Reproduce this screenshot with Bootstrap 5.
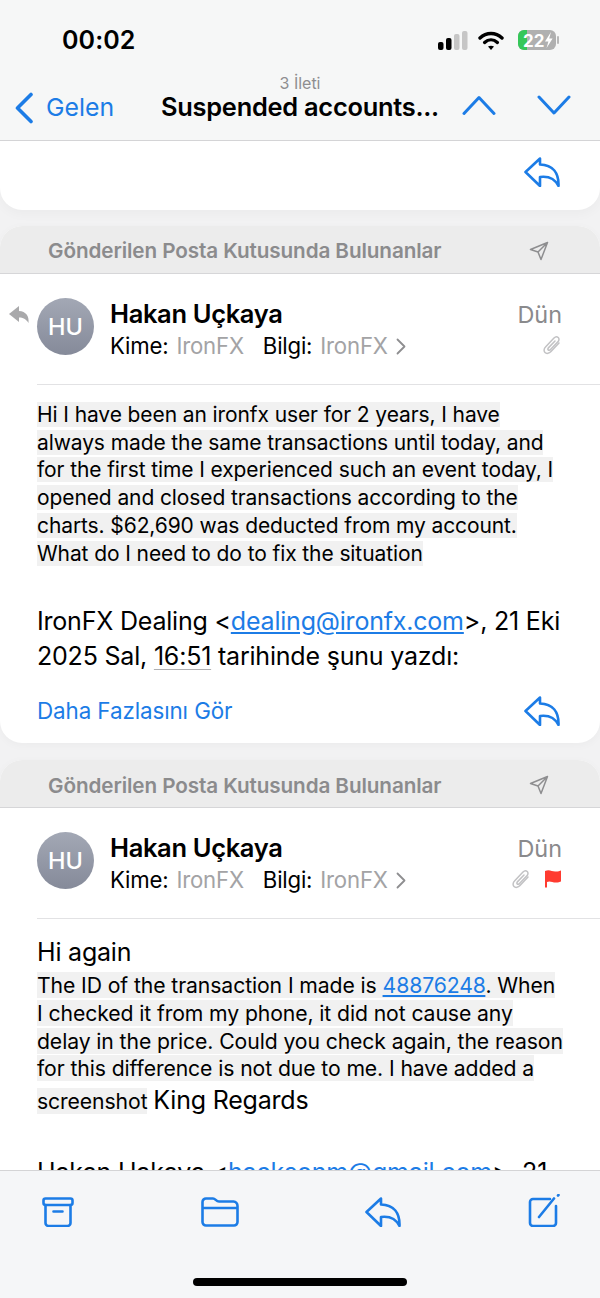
<!DOCTYPE html>
<html lang="tr">
  <head>
    <meta charset="UTF-8" />
    <meta name="viewport" content="width=device-width, initial-scale=1.0" />
    <title>Suspended accounts</title>
    <link href="https://cdn.jsdelivr.net/npm/bootstrap@5.3.0/dist/css/bootstrap.min.css" rel="stylesheet" />
    <style>
      html, body { margin: 0; height: 1298px; overflow: hidden; }
      body { font-family: Inter, "Liberation Sans", sans-serif; color: #000; background: #f2f2f3; }
      a { color: #1c7ce6; }
      .phone { height: 1298px; width: 600px; }
      .ico { display: block; flex: none; fill: none; stroke: #1c7ce6; stroke-width: 2.6; stroke-linecap: round; stroke-linejoin: round; }

      .top-bar { height: 141px; flex: none; background: #f6f7f7; border-bottom: 1px solid #d4d4d6; }
      .status-row { height: 66px; padding: 25px 40px 0 62px; }
      .clock { font-size: 25px; font-weight: 600; line-height: 30px; letter-spacing: .1px; }
      .status-icons { height: 30px; }
      .signal-gap { margin: 0 14px 0 10px; }
      .title-row { height: 74px; padding: 0 29px 0 14px; }
      .back-link { width: 130px; font-size: 24.8px; color: #1c7ce6; gap: 12px; padding-top: 23px; }
      .title-box { width: 300px; margin-left: 6px; padding-top: 9px; }
      .count { font-size: 16px; line-height: 17px; color: #8e8e90; }
      .subject { font-size: 25.4px; font-weight: 600; line-height: 30px; letter-spacing: -.25px; white-space: nowrap; }
      .arrows { gap: 41px; margin-left: auto; padding-top: 28px; }

      .scroller { flex: 1 1 auto; min-height: 0; overflow: hidden; }
      .mail-tail { height: 69px; background: #fff; border-radius: 0 0 22px 22px; padding: 16px 40px 0 0; margin-bottom: 16px; box-shadow: 0 4px 12px rgba(0,0,0,.03); }
      .mail-box { background: #fff; border-radius: 22px; margin-bottom: 17px; overflow: hidden; box-shadow: 0 2px 10px rgba(0,0,0,.03); }
      .box-head { height: 48px; background: #ececec; border-bottom: 1px solid #d6d6d8; padding: 3px 51px 0 48px; font-size: 20.7px; font-weight: 600; color: #8b8b8d; letter-spacing: -.1px; }
      .mail-meta { margin-left: 37px; height: 111px; border-bottom: 1px solid #e2e2e4; padding: 24px 38px 0 0; }
      .replied { left: -28px; top: 32px; }
      .avatar { width: 57px; height: 57px; flex: none; border-radius: 50%; background: linear-gradient(#a3a8b5, #858a99); color: #fff; font-size: 23.5px; font-weight: 500; }
      .sender { margin-left: 16px; }
      .sender-name { font-size: 25.5px; font-weight: 600; line-height: 32px; letter-spacing: -.35px; }
      .to-line { font-size: 22.2px; line-height: 30px; letter-spacing: -.2px; padding-top: 1px; }
      .to-line span { color: #a3a3a5; margin-left: 2px; }
      .to-line b { font-weight: 400; margin-left: 19px; }
      .when { font-size: 23.4px; line-height: 32px; color: #8a8a8c; margin-top: 1px; }
      .marks { gap: 13px; margin-top: 4px; }

      .mail-text { padding: 16px 37px 0 37px; font-size: 21px; line-height: 27.7px; letter-spacing: -.1px; }
      .mail-text.second { padding-top: 16px; padding-bottom: 40px; }
      .second .shade { font-size: 21.2px; }
      .para-two { margin-top: 2px; }
      .shade { background: #f1f1f1; box-decoration-break: clone; -webkit-box-decoration-break: clone; }
      .big-line { font-size: 25px; line-height: 35px; letter-spacing: -.2px; }
      .quote-line { margin-top: 37px; }
      .quote-line u { text-decoration-color: #b0b0b2; text-underline-offset: 4px; text-decoration-thickness: 1px; }
      .more-row { padding: 5px 40px 0 37px; height: 69px; }
      .more-row a { font-size: 22.4px; text-decoration: none; letter-spacing: -.1px; }

      .bottom-bar { height: 128px; flex: none; background: #f5f6f8; border-top: 1px solid #d4d4d6; }
      .tools { padding: 23px 39px 0 42px; }
      .home-line { width: 214px; height: 8px; background: #000; border-radius: 4px; margin: 51px auto 0; }
    </style>
  </head>
  <body>
    <div class="phone d-flex flex-column">
      <header class="top-bar">
        <div class="status-row d-flex justify-content-between">
          <div class="clock">00:02</div>
          <div class="status-icons d-flex align-items-center">
            <svg width="30" height="19" viewBox="0 0 30 19"><rect x="0" y="11" width="5.500" height="8" rx="2"/><rect x="8" y="7" width="5.500" height="12" rx="2"/><rect x="16" y="3" width="5.500" height="16" rx="2" fill="#c6c6c6"/><rect x="24" y="0" width="5.500" height="19" rx="2" fill="#c6c6c6"/></svg>
            <svg class="signal-gap" width="26" height="19" viewBox="0 0 26 19" fill="none" stroke="#000" stroke-width="3.400" stroke-linecap="round"><path d="M2 7C8.400 1 17.600 1 24 7"/><path d="M6.600 11.400c3.800-3.400 9-3.400 12.800 0"/><path d="M13 19l-3-3.400c1.800-1.300 4.200-1.300 6 0z" fill="#000" stroke="none"/></svg>
            <svg width="42" height="20" viewBox="0 0 42 20"><rect x="0" y="0" width="38" height="20" rx="6" fill="#b0b0b0"/><path d="M6 0h3v20H6a6 6 0 0 1-6-6V6a6 6 0 0 1 6-6z" fill="#35c759"/><rect x="39" y="6" width="2" height="8" rx="1" fill="#b8b8b8"/><text x="5" y="16.500" font-size="17" font-weight="700" fill="#fff" font-family="Inter, sans-serif">22</text><path d="M33 2l-6 9.500h3.400L28.600 18l6-9.500h-3.400z" fill="#fff"/></svg>
          </div>
        </div>
        <div class="title-row d-flex align-items-start">
          <div class="back-link d-flex align-items-center">
            <svg class="ico" width="20" height="32" viewBox="0 0 20 32" style="stroke-width:3.600"><path d="M17 2.500L3.500 16 17 29.500"/></svg>
            <span>Gelen</span>
          </div>
          <div class="title-box text-center">
            <div class="count">3 İleti</div>
            <div class="subject">Suspended accounts...</div>
          </div>
          <div class="arrows d-flex">
            <svg class="ico" width="34" height="22" viewBox="0 0 34 22" style="stroke-width:3"><path d="M2 19.500L17 3.500 32 19.500"/></svg>
            <svg class="ico" width="34" height="22" viewBox="0 0 34 22" style="stroke-width:3"><path d="M2 3L17 19 32 3"/></svg>
          </div>
        </div>
      </header>

      <main class="scroller">
        <div class="mail-tail d-flex justify-content-end">
          <svg class="ico" width="36" height="30" viewBox="0 0 36 30"><path d="M16 1.500L1.500 15 16 29v-9c8-1 15 2 18.500 9 .5-13-5.500-21-18.500-21.500z"/></svg>
        </div>

        <section class="mail-box">
          <div class="box-head d-flex justify-content-between align-items-center">
            <span>Gönderilen Posta Kutusunda Bulunanlar</span>
            <svg width="20" height="20" viewBox="0 0 20 20" fill="none" stroke="#8e8e90" stroke-width="1.500" stroke-linejoin="round"><path d="M18.500 1.500L1.500 8.500l7.500 2.500 3 7.500zM18.500 1.500L9 11"/></svg>
          </div>
          <div class="mail-meta d-flex position-relative">
            <svg class="replied position-absolute" width="21" height="18" viewBox="0 0 21 18"><path d="M10 0L0 8l10 8v-4.500c4 0 7 1.500 9.500 5.500.8-7-2.500-11.500-9.500-12z" fill="#a9a9ab"/></svg>
            <div class="avatar d-flex align-items-center justify-content-center">HU</div>
            <div class="sender flex-grow-1">
              <div class="sender-name">Hakan Uçkaya</div>
              <div class="to-line d-flex align-items-center">Kime:<span>&nbsp;IronFX</span><b>Bilgi:</b><span>&nbsp;IronFX</span>
                <svg class="ms-2" width="10" height="17" viewBox="0 0 10 17" fill="none" stroke="#8e8e90" stroke-width="1.800" stroke-linecap="round" stroke-linejoin="round"><path d="M1.500 1.500L8.500 8.500l-7 7"/></svg>
              </div>
            </div>
            <div class="text-end">
              <div class="when">Dün</div>
              <div class="marks d-flex justify-content-end">
                <svg width="19" height="20" viewBox="0 0 19 20" fill="none" stroke="#c2c2c4" stroke-width="1.500" stroke-linecap="round"><path d="M16 8l-8 8.500c-1.800 2-4.500 2.500-6 1s-1-4 .5-5.500L11 3c1.300-1.300 3-1.600 4.200-.5s.9 3-.3 4.300L7.500 14.500c-.7.800-1.700 1-2.300.4s-.3-1.600.4-2.300L12 6"/></svg>
              </div>
            </div>
          </div>
          <div class="mail-text">
            <div><span class="shade">Hi I have been an ironfx user for 2 years, I have always made the same transactions until today, and for the first time I experienced such an event today, I opened and closed transactions according to the charts. $62,690 was deducted from my account. What do I need to do to fix the situation</span></div>
            <div class="big-line quote-line">IronFX Dealing &lt;<a href="#">dealing@ironfx.com</a>&gt;, 21 Eki<br />2025 Sal, <u>16:51</u> tarihinde şunu yazdı:</div>
          </div>
          <div class="more-row d-flex justify-content-between align-items-center">
            <a href="#">Daha Fazlasını Gör</a>
            <svg class="ico" width="36" height="30" viewBox="0 0 36 30"><path d="M16 1.500L1.500 15 16 29v-9c8-1 15 2 18.500 9 .5-13-5.500-21-18.500-21.500z"/></svg>
          </div>
        </section>

        <section class="mail-box">
          <div class="box-head d-flex justify-content-between align-items-center">
            <span>Gönderilen Posta Kutusunda Bulunanlar</span>
            <svg width="20" height="20" viewBox="0 0 20 20" fill="none" stroke="#8e8e90" stroke-width="1.500" stroke-linejoin="round"><path d="M18.500 1.500L1.500 8.500l7.500 2.500 3 7.500zM18.500 1.500L9 11"/></svg>
          </div>
          <div class="mail-meta d-flex">
            <div class="avatar d-flex align-items-center justify-content-center">HU</div>
            <div class="sender flex-grow-1">
              <div class="sender-name">Hakan Uçkaya</div>
              <div class="to-line d-flex align-items-center">Kime:<span>&nbsp;IronFX</span><b>Bilgi:</b><span>&nbsp;IronFX</span>
                <svg class="ms-2" width="10" height="17" viewBox="0 0 10 17" fill="none" stroke="#8e8e90" stroke-width="1.800" stroke-linecap="round" stroke-linejoin="round"><path d="M1.500 1.500L8.500 8.500l-7 7"/></svg>
              </div>
            </div>
            <div class="text-end">
              <div class="when">Dün</div>
              <div class="marks d-flex justify-content-end">
                <svg width="19" height="20" viewBox="0 0 19 20" fill="none" stroke="#c2c2c4" stroke-width="1.500" stroke-linecap="round"><path d="M16 8l-8 8.500c-1.800 2-4.500 2.500-6 1s-1-4 .5-5.500L11 3c1.300-1.300 3-1.600 4.200-.5s.9 3-.3 4.300L7.500 14.500c-.7.800-1.700 1-2.300.4s-.3-1.600.4-2.300L12 6"/></svg>
                <svg width="18" height="19" viewBox="0 0 18 19"><path d="M1 2c5-2 7 1 11 .5 2 0 4-.5 5-1v11c-1 .5-3 1-5 1-4 0-6-2-9-.5V18.500H1z" fill="#ff3b30"/></svg>
              </div>
            </div>
          </div>
          <div class="mail-text second">
            <div class="big-line">Hi again</div>
            <div class="para-two"><span class="shade">The ID of the transaction I made is <a href="#">48876248</a>. When<br />I checked it from my phone, it did not cause any<br />delay in the price. Could you check again, the reason<br />for this difference is not due to me. I have added a<br />screenshot</span> <span class="big-line">King Regards</span></div>
            <div class="big-line quote-line">Hakan Hakaya &lt;<a href="#">hacksonm@gmail.com</a>&gt;, 21</div>
          </div>
        </section>
      </main>

      <footer class="bottom-bar">
        <div class="tools d-flex justify-content-between align-items-end">
          <svg class="ico" width="32" height="30" viewBox="0 0 32 30"><rect x="1.500" y="1.500" width="29" height="6.500" rx="2"/><path d="M3.500 8v18a3 3 0 0 0 3 3h19a3 3 0 0 0 3-3V8M11.500 14.500h9"/></svg>
          <svg class="ico" width="38" height="30" viewBox="0 0 38 30"><path d="M1.500 5a3.500 3.500 0 0 1 3.500-3.500h7c2.500 0 3 3 6 3h14.500A4.500 4.500 0 0 1 36.500 9v16a3.500 3.500 0 0 1-3.500 3.500H5A3.500 3.500 0 0 1 1.500 25zM1.500 11h35"/></svg>
          <svg class="ico" width="36" height="30" viewBox="0 0 36 30"><path d="M16 1.500L1.500 15 16 29v-9c8-1 15 2 18.500 9 .5-13-5.500-21-18.500-21.500z"/></svg>
          <svg class="ico" width="33" height="33" viewBox="0 0 33 33"><path d="M22 5H5a3 3 0 0 0-3 3v21a3 3 0 0 0 3 3h20a3 3 0 0 0 3-3V12"/><path d="M11 23L26 4.500M30 1.500l.5-.5"/></svg>
        </div>
        <div class="home-line"></div>
      </footer>
    </div>
    <script src="https://cdn.jsdelivr.net/npm/bootstrap@5.3.0/dist/js/bootstrap.bundle.min.js"></script>
  </body>
</html>
